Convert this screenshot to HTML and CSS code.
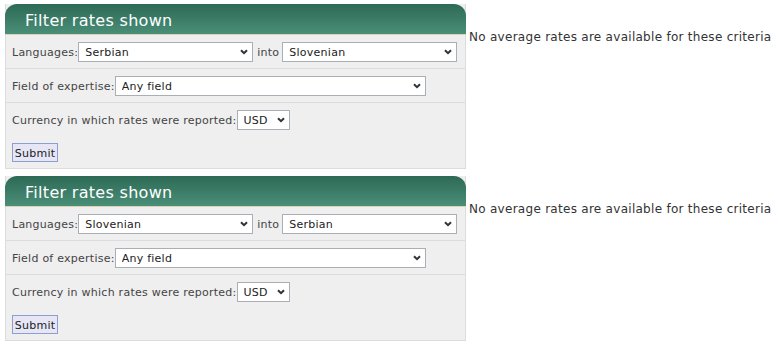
FILE: index.html
```html
<!DOCTYPE html>
<html>
<head>
<meta charset="utf-8">
<link rel="stylesheet" href="styles.css">
</head>
<body>
<div class="block">
  <form class="panel">
    <div class="panel-head">Filter rates shown</div>
    <div class="row">
      <span class="lbl">Languages:</span>
      <span class="sel w175"><select><option>Serbian</option></select><svg class="chev" width="8" height="6" viewBox="0 0 8 6"><path d="M1 1.2 L4 4.2 L7 1.2" fill="none" stroke="#333" stroke-width="2"/></svg></span>
      <span class="into">into</span>
      <span class="sel w175"><select><option>Slovenian</option></select><svg class="chev" width="8" height="6" viewBox="0 0 8 6"><path d="M1 1.2 L4 4.2 L7 1.2" fill="none" stroke="#333" stroke-width="2"/></svg></span>
    </div>
    <div class="row">
      <span class="lbl">Field of expertise:</span>
      <span class="sel w311"><select><option>Any field</option></select><svg class="chev" width="8" height="6" viewBox="0 0 8 6"><path d="M1 1.2 L4 4.2 L7 1.2" fill="none" stroke="#333" stroke-width="2"/></svg></span>
    </div>
    <div class="row noline">
      <span class="lbl">Currency in which rates were reported:</span>
      <span class="sel w53"><select><option>USD</option></select><svg class="chev" width="8" height="6" viewBox="0 0 8 6"><path d="M1 1.2 L4 4.2 L7 1.2" fill="none" stroke="#333" stroke-width="2"/></svg></span>
    </div>
    <div class="submit-row"><button type="button" class="btn">Submit</button></div>
  </form>
  <div class="msg">No average rates are available for these criteria</div>
</div>
<div class="block">
  <form class="panel">
    <div class="panel-head">Filter rates shown</div>
    <div class="row">
      <span class="lbl">Languages:</span>
      <span class="sel w175"><select><option>Slovenian</option></select><svg class="chev" width="8" height="6" viewBox="0 0 8 6"><path d="M1 1.2 L4 4.2 L7 1.2" fill="none" stroke="#333" stroke-width="2"/></svg></span>
      <span class="into">into</span>
      <span class="sel w175"><select><option>Serbian</option></select><svg class="chev" width="8" height="6" viewBox="0 0 8 6"><path d="M1 1.2 L4 4.2 L7 1.2" fill="none" stroke="#333" stroke-width="2"/></svg></span>
    </div>
    <div class="row">
      <span class="lbl">Field of expertise:</span>
      <span class="sel w311"><select><option>Any field</option></select><svg class="chev" width="8" height="6" viewBox="0 0 8 6"><path d="M1 1.2 L4 4.2 L7 1.2" fill="none" stroke="#333" stroke-width="2"/></svg></span>
    </div>
    <div class="row noline">
      <span class="lbl">Currency in which rates were reported:</span>
      <span class="sel w53"><select><option>USD</option></select><svg class="chev" width="8" height="6" viewBox="0 0 8 6"><path d="M1 1.2 L4 4.2 L7 1.2" fill="none" stroke="#333" stroke-width="2"/></svg></span>
    </div>
    <div class="submit-row"><button type="button" class="btn">Submit</button></div>
  </form>
  <div class="msg">No average rates are available for these criteria</div>
</div>
</body>
</html>
```
FILE: styles.css
```css
html, body {
  margin: 0;
  padding: 0;
  background: #fff;
}
body {
  padding: 4px 0 0 5px;
  font-family: "DejaVu Sans", Verdana, sans-serif;
  font-size: 11px;
  letter-spacing: 0.25px;
  color: #444;
}
.block {
  display: flex;
  align-items: flex-start;
  margin-bottom: 7px;
}
.panel {
  width: 461px;
  box-sizing: border-box;
  margin: 0;
  background: #efefef;
  border: 1px solid #dcdcdc;
  border-top: none;
}
.panel-head {
  margin: 0 -1px;
  height: 27px;
  padding: 3px 0 0 20px;
  line-height: 27px;
  font-size: 16px;
  letter-spacing: 0.3px;
  color: #fff;
  background: linear-gradient(#2d6a55, #4a8e78);
  border-radius: 12px 12px 0 0;
  border-bottom: 1px solid #d8d3b9;
}
.row {
  display: flex;
  align-items: center;
  height: 33px;
  padding: 0 6px;
  border-bottom: 1px solid #dcdcdc;
}
.row.noline {
  border-bottom: none;
}
.lbl {
  margin-right: 0;
  padding-top: 1px;
  white-space: nowrap;
}
.into {
  margin: 0 3px 0 4px;
  padding-top: 1px;
}
.sel {
  position: relative;
  display: inline-block;
  height: 20px;
}
.sel select {
  appearance: none;
  -webkit-appearance: none;
  width: 100%;
  height: 20px;
  box-sizing: border-box;
  border: 1px solid #a9afb5;
  border-radius: 0;
  background: #fff;
  font-family: "DejaVu Sans", Verdana, sans-serif;
  font-size: 11px;
  letter-spacing: 0.25px;
  color: #222;
  padding: 1px 0 0 6px;
  margin: 0;
  outline: none;
}
.sel .chev {
  position: absolute;
  right: 5px;
  top: 7px;
  pointer-events: none;
}
.w175 { width: 175px; }
.w311 { width: 311px; }
.w53 { width: 53px; }
.submit-row {
  padding: 7px 6px 6px;
  display: flex;
}
.btn {
  height: 19px;
  width: 46px;
  box-sizing: border-box;
  padding: 1px 0 0;
  margin: 0;
  border: 1px solid #8e9fce;
  background: #e6e6f6;
  font-family: "DejaVu Sans", Verdana, sans-serif;
  font-size: 11px;
  letter-spacing: 0.25px;
  color: #222;
  border-radius: 0;
}
.msg {
  margin: 26px 0 0 3px;
  font-size: 12px;
  letter-spacing: 0.28px;
  color: #333;
  white-space: nowrap;
}
```
